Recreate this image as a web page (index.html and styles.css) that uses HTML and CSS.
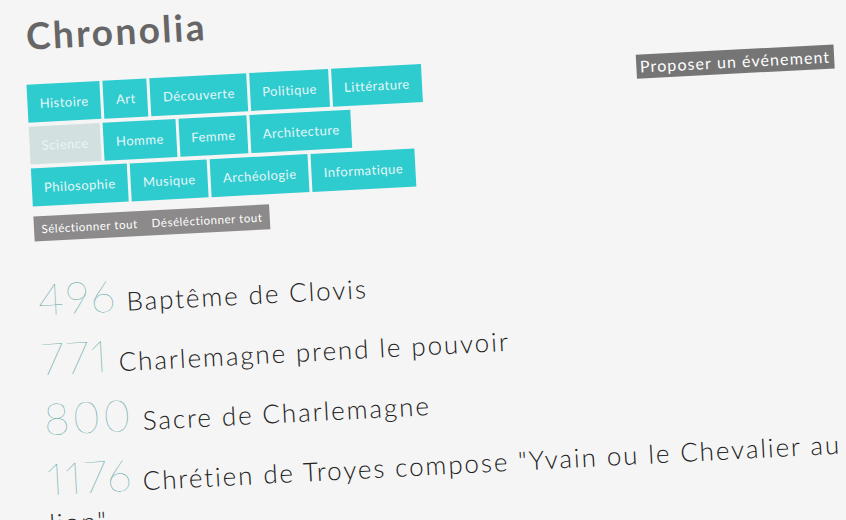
FILE: index.html
```html
<!DOCTYPE html>
<html lang="fr">
<head>
  <meta charset="UTF-8" />
  <title>Chronolia</title>
  <link rel="stylesheet" href="styles.css">
</head>
<body>
  <div class="page">
    <header class="top">
      <div class="left">
        <h1 class="logo">Chronolia</h1>
        <div class="tags">
          <a class="tag">Histoire</a>
          <a class="tag">Art</a>
          <a class="tag">Découverte</a>
          <a class="tag">Politique</a>
          <a class="tag">Littérature</a>
          <a class="tag off">Science</a>
          <a class="tag">Homme</a>
          <a class="tag">Femme</a>
          <a class="tag">Architecture</a>
          <a class="tag">Philosophie</a>
          <a class="tag">Musique</a>
          <a class="tag">Archéologie</a>
          <a class="tag">Informatique</a>
        </div>
        <div class="select-bar">
          <a>Séléctionner tout</a>
          <a>Déséléctionner tout</a>
        </div>
      </div>
      <a class="propose">Proposer un événement</a>
    </header>
    <ul class="events">
      <li><span class="year">496</span> Baptême de Clovis</li>
      <li><span class="year">771</span> Charlemagne prend le pouvoir</li>
      <li><span class="year">800</span> Sacre de Charlemagne</li>
      <li><span class="year">1176</span> Chrétien de Troyes compose "Yvain ou le Chevalier au lion"</li>
    </ul>
  </div>
</body>
</html>
```

FILE: styles.css
```css
html, body {
  height: 100%;
  margin: 0;
  overflow: hidden;
  background: #f5f5f5;
  font-family: 'Lato', 'Liberation Sans', sans-serif;
}

.page {
  width: 808px;
  padding: 14px 0 0 22px;
  transform: rotate(-3deg);
  transform-origin: 0 0;
}

.top {
  display: flex;
  justify-content: space-between;
  align-items: flex-start;
}

.logo {
  margin: 0 0 0 2px;
  height: 72px;
  font-size: 37px;
  line-height: 46px;
  font-weight: 700;
  letter-spacing: 2.4px;
  color: #666;
}

.tags {
  display: flex;
  flex-wrap: wrap;
  gap: 4px 3px;
  width: 400px;
}

.tag {
  padding: 0 12.2px;
  height: 38px;
  line-height: 38px;
  font-size: 13px;
  font-weight: 400;
  letter-spacing: 0.5px;
  color: #e6f7f7;
  background: #2ecbcf;
}

.tag.off {
  background: #d3e0e0;
}

.select-bar {
  display: inline-flex;
  gap: 14px;
  margin-top: 10px;
  padding: 0 7.5px;
  height: 25px;
  line-height: 25px;
  font-size: 11.5px;
  letter-spacing: 0.55px;
  color: #fff;
  background: #8c8a8a;
}

.propose {
  margin-top: 74px;
  padding: 0 4px;
  height: 24px;
  line-height: 24px;
  font-size: 16px;
  font-weight: 400;
  letter-spacing: 1.1px;
  color: #fff;
  background: #757575;
}

.events {
  list-style: none;
  margin: 30px 12px 0 0;
  padding: 0;
}

.events li {
  margin-bottom: 5px;
  font-size: 26px;
  line-height: 34px;
  font-weight: 300;
  letter-spacing: 1.9px;
  color: #222;
}

.year {
  font-size: 44px;
  line-height: 55px;
  font-weight: 100;
  font-variant-numeric: proportional-nums;
  letter-spacing: 2.5px;
  color: #4f9f9c;
}
```
